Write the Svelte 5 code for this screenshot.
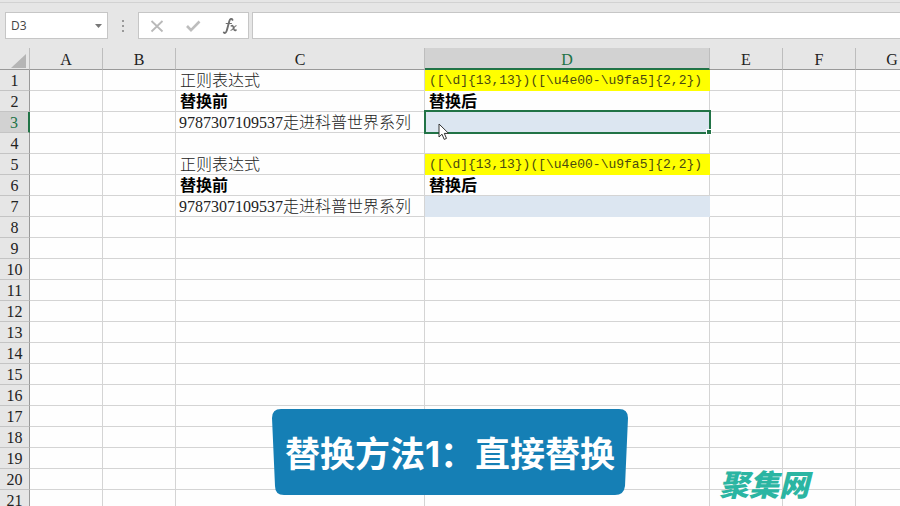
<script lang="ts">
  type Cell = { text?: string; kind: string };

  const letters = "ABCDEFGHIJKLMNOPQRSTUVWXYZ".split("");
  const pattern = "([\\d]{13,13})([\\u4e00-\\u9fa5]{2,2})";
  const sample = "9787307109537走进科普世界系列";

  const cells: Record<string, Cell> = {
    C1: { text: "正则表达式", kind: "label" },
    D1: { text: pattern, kind: "pattern" },
    C2: { text: "替换前", kind: "heading" },
    D2: { text: "替换后", kind: "heading" },
    C3: { text: sample, kind: "value" },
    D3: { kind: "result" },
    C5: { text: "正则表达式", kind: "label" },
    D5: { text: pattern, kind: "pattern" },
    C6: { text: "替换前", kind: "heading" },
    D6: { text: "替换后", kind: "heading" },
    C7: { text: sample, kind: "value" },
    D7: { kind: "result" },
  };

  let windowWidth = $state(0);
  let windowHeight = $state(0);
  let selectedColumn = $state("D");
  let selectedRow = $state(3);
  let formula = $state("");

  // A to D take 710px with the row numbers, the rest are 73px each
  let columns = $derived(
    letters.slice(0, Math.max(4, 4 + Math.ceil((windowWidth - 710) / 73)))
  );
  let rows = $derived(
    Array.from({ length: Math.max(7, Math.ceil((windowHeight - 69) / 21)) }, (_, i) => i + 1)
  );

  function select(column: string, row: number): void {
    selectedColumn = column;
    selectedRow = row;
    formula = cells[column + row]?.text ?? "";
  }
</script>

<svelte:window bind:innerWidth={windowWidth} bind:innerHeight={windowHeight} />

<main class="workbook">
  <div class="formula_bar">
    <div class="name_box">
      <input class="name_input" aria-label="Name box" value={selectedColumn + selectedRow} />
      <button class="name_button" aria-label="Open name list">
        <svg width="7" height="4" viewBox="0 0 7 4"><path d="M0 0h7L3.5 4z" fill="#777" /></svg>
      </button>
    </div>
    <svg class="grip" width="4" height="14" viewBox="0 0 4 14" fill="#999">
      <rect x="1" y="1" width="2" height="2" />
      <rect x="1" y="6" width="2" height="2" />
      <rect x="1" y="11" width="2" height="2" />
    </svg>
    <div class="actions">
      <button class="action" aria-label="Cancel">
        <svg width="14" height="14" viewBox="0 0 14 14">
          <path d="M1.5 2l11 10.5M12.5 2l-11 10.5" fill="none" stroke="#b9b9b9" stroke-width="1.8" />
        </svg>
      </button>
      <button class="action" aria-label="Enter">
        <svg width="16" height="14" viewBox="0 0 16 14">
          <path d="M2 7l4 4.2L14.5 2.5" fill="none" stroke="#bdbdbd" stroke-width="2.6" />
        </svg>
      </button>
      <button class="action" aria-label="Insert function">
        <svg width="16" height="18" viewBox="0 0 16 18" fill="none" stroke="#6f6f6f" stroke-linecap="round">
          <path d="M10.5 2.8C9.8 1.3 8 1.6 7.3 4.2L4.8 13.4C4.2 15.9 2.8 16.5 1.8 15.4" stroke-width="1.9" />
          <path d="M4.2 6.5h5.2" stroke-width="1.2" />
          <path d="M9.3 8.9c1.4-.7 1.9.2 2.3 2.2s1 3 2.4 1.9" stroke-width="1.6" />
          <path d="M14.2 8.8c-1.5-.2-3.7 4.8-5.3 4.5" stroke-width="1.1" />
        </svg>
      </button>
    </div>
    <input class="formula_input" aria-label="Formula" bind:value={formula} />
  </div>

  <div class="sheet">
    <table>
      <colgroup>
        <col class="col_number" />
        {#each columns as column}
          <col class="col_{column}" />
        {/each}
      </colgroup>
      <thead>
        <tr>
          <th class="corner" aria-label="Select all">
            <svg width="16" height="16" viewBox="0 0 16 16"><path d="M15 1v14H0z" fill="#b5b5b5" /></svg>
          </th>
          {#each columns as column}
            <th scope="col" class:active={column === selectedColumn}>{column}</th>
          {/each}
        </tr>
      </thead>
      <tbody>
        {#each rows as row}
          <tr>
            <th scope="row" class:active={row === selectedRow}>{row}</th>
            {#each columns as column}
              {@const cell = cells[column + row]}
              <td
                class={cell?.kind}
                class:selected={column === selectedColumn && row === selectedRow}
                onclick={() => select(column, row)}
              >{cell?.text ?? ""}</td>
            {/each}
          </tr>
        {/each}
      </tbody>
    </table>

    <svg class="pointer" width="12" height="18" viewBox="0 0 12 18">
      <path
        d="M1 1v13l3-2.8 2.2 5.2 2.3-1-2.2-5H10.6z"
        fill="#fff"
        stroke="#333"
        stroke-width="1"
      />
    </svg>
  </div>

  <div class="caption">
    <svg class="caption_shape" viewBox="0 0 356 86" preserveAspectRatio="none">
      <path
        d="M9 0H347Q356 0 356 9L353 77Q352 86 343 86H12Q3 86 3 77L0 9Q0 0 9 0z"
        fill="#157fb5"
      />
    </svg>
    <p class="caption_text">替换方法1：直接替换</p>
  </div>

  <p class="watermark">聚集网</p>
</main>

<style>
  :global(body) {
    margin: 0;
  }

  .workbook {
    position: relative;
    display: flex;
    flex-direction: column;
    height: 100vh;
    overflow: hidden;
    box-sizing: border-box;
    padding-top: 2px;
    background: #e6e6e6;
    color: #222;
    font-family: "Liberation Serif", "Noto Sans CJK SC", serif;
    font-size: 16px;
  }

  .formula_bar {
    display: flex;
    align-items: center;
    flex: none;
    padding: 9px 0 9px 5px;
    border-top: 1px solid #d2d2d2;
  }

  .name_box,
  .actions,
  .formula_input {
    box-sizing: border-box;
    height: 27px;
    border: 1px solid #c6c6c6;
    background: #fff;
  }

  .name_box {
    display: flex;
    width: 103px;
  }

  .name_input {
    flex: 1;
    min-width: 0;
    padding: 0 5px;
    border: 0;
    outline: 0;
    background: none;
    color: #444;
    font-family: "Open Sans", sans-serif;
    font-size: 12px;
  }

  .name_button,
  .action {
    display: flex;
    align-items: center;
    justify-content: center;
    padding: 0;
    border: 0;
    background: none;
  }

  .name_button {
    width: 18px;
  }

  .grip {
    margin: 0 13px;
  }

  .actions {
    display: flex;
    width: 111px;
    margin-right: 3px;
  }

  .action {
    flex: 1;
  }

  .formula_input {
    flex: 1;
    min-width: 0;
    border-right: 0;
    outline: 0;
    padding: 0 8px;
    font-size: 14px;
  }

  .sheet {
    position: relative;
    flex: 1;
    min-height: 0;
    overflow: hidden;
  }

  table {
    width: max-content;
    table-layout: fixed;
    border-collapse: separate;
    border-spacing: 0;
    background: #fefefe;
  }

  col {
    width: 73px;
  }

  .col_number {
    width: 30px;
  }

  .col_C {
    width: 249px;
  }

  .col_D {
    width: 285px;
  }

  th,
  td {
    box-sizing: border-box;
    height: 21px;
    padding: 2px 0 0;
    border-right: 1px solid #d4d4d4;
    border-bottom: 1px solid #d4d4d4;
    line-height: 18px;
    white-space: nowrap;
  }

  th {
    background: #e6e6e6;
    font-weight: 400;
    text-align: center;
  }

  thead th {
    border-right-color: #bdbdbd;
    border-bottom-color: #999;
    padding-top: 3px;
    line-height: 18px;
  }

  thead th.active {
    border-bottom: 2px solid #217346;
    background: #d2d2d2;
    color: #217346;
    line-height: 17px;
  }

  tbody th {
    border-right-color: #999;
    border-bottom-color: #c4c4c4;
  }

  tbody th.active {
    border-right: 2px solid #217346;
    background: #d2d2d2;
    color: #217346;
  }

  thead .corner {
    padding: 0 2px 0 0;
    line-height: 0;
    text-align: right;
    vertical-align: bottom;
  }

  .label,
  .heading,
  .pattern {
    padding-left: 4px;
  }

  .value {
    padding-left: 3px;
  }

  .heading {
    color: #000;
    font-weight: 700;
  }

  .label,
  .value {
    font-weight: 300;
  }

  .pattern {
    border-color: #ff0;
    background: #ff0;
    font-family: "Liberation Mono", monospace;
    font-size: 13px;
    color: #4a4a10;
  }

  .result {
    border-color: #dce6f1;
    background: #dce6f1;
  }

  .selected {
    position: relative;
  }

  .selected::before {
    content: "";
    position: absolute;
    inset: -2px -2px -2px -1px;
    border: 2px solid #217346;
  }

  .selected::after {
    content: "";
    position: absolute;
    right: -3px;
    bottom: -3px;
    width: 4px;
    height: 4px;
    border: 1px solid #fff;
    background: #217346;
  }

  .pointer {
    position: absolute;
    left: 438px;
    top: 75px;
    pointer-events: none;
  }

  .caption {
    position: absolute;
    left: 50%;
    bottom: 11px;
    width: 356px;
    transform: translateX(-50%);
  }

  .caption_shape {
    position: absolute;
    width: 100%;
    height: 100%;
  }

  .caption_text {
    position: relative;
    margin: 0;
    padding-top: 4px;
    color: #fff;
    font-family: Inter, "Noto Sans CJK SC", sans-serif;
    font-size: 35px;
    font-weight: 700;
    line-height: 82px;
    text-align: center;
    white-space: nowrap;
  }

  .watermark {
    position: absolute;
    right: 91px;
    bottom: 8px;
    margin: 0;
    color: #2bb5a2;
    font-family: "Noto Sans CJK SC", sans-serif;
    font-size: 30px;
    font-style: italic;
    font-weight: 900;
    line-height: 30px;
  }
</style>
